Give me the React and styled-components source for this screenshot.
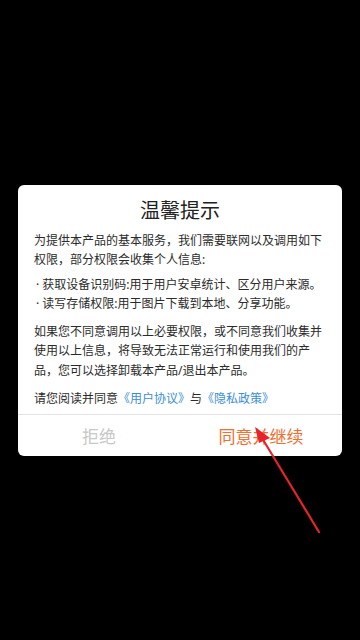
import React from "react";
import styled, { createGlobalStyle } from "styled-components";

const GlobalStyle = createGlobalStyle`
  html, body {
    margin: 0;
    padding: 0;
    background: #000;
    font-family: "Noto Sans", "Noto Sans CJK SC", sans-serif;
  }
`;

const App = () => {
  return (
    <Screen>
      <GlobalStyle />
      <Dialog>
        <Title>温馨提示</Title>
        <Body>
          <Para>
            为提供本产品的基本服务，我们需要联网以及调用如下权限，部分权限会收集个人信息:
          </Para>
          <List>
            <Item>· 获取设备识别码:用于用户安卓统计、区分用户来源。</Item>
            <Item>· 读写存储权限:用于图片下载到本地、分享功能。</Item>
          </List>
          <Para>
            如果您不同意调用以上必要权限，或不同意我们收集并使用以上信息，将导致无法正常运行和使用我们的产品，您可以选择卸载本产品/退出本产品。
          </Para>
          <Agree>
            请您阅读并同意<Link>《用户协议》</Link>与<Link>《隐私政策》</Link>
          </Agree>
        </Body>
        <Actions>
          <ActionButton>拒绝</ActionButton>
          <ActionButton primary>同意并继续</ActionButton>
        </Actions>
      </Dialog>
      {/* red annotation arrow */}
      <Arrow viewBox="0 0 360 640">
        <line x1="319" y1="532" x2="262" y2="438" stroke="#e8232b" strokeWidth="2.2" strokeLinecap="round" />
        <polygon points="255,427 270,438 259,443" fill="#e8232b" />
      </Arrow>
    </Screen>
  );
};

const Screen = styled.div`
  position: relative;
  width: 360px;
  height: 640px;
  background: #000;
  display: flex;
  align-items: center;
  justify-content: center;
  overflow: hidden;
`;

const Dialog = styled.div`
  width: 324px;
  height: 271px;
  background: #fff;
  border-radius: 6px;
  display: flex;
  flex-direction: column;
  box-sizing: border-box;
`;

const Title = styled.div`
  padding-top: 13px;
  text-align: center;
  font-size: 20px;
  line-height: 26px;
  color: #222;
`;

const Body = styled.div`
  padding: 7px 16px 0;
  font-size: 12px;
  line-height: 19.5px;
  color: #2b2b2b;
  display: flex;
  flex-direction: column;
  gap: 5px;
  flex: 1;
`;

const Para = styled.p`
  margin: 0;
`;

const List = styled.div`
  display: flex;
  flex-direction: column;
  margin-bottom: 3px;
`;

const Item = styled.div`
  padding-left: 2px;
  white-space: nowrap;
`;

const Agree = styled.div`
  margin-top: 4px;
`;

const Link = styled.span`
  color: #3a8ed6;
`;

const Actions = styled.div`
  display: flex;
  height: 41px;
  border-top: 1px solid #e3e3e3;
`;

const ActionButton = styled.div`
  flex: 1;
  display: flex;
  align-items: center;
  justify-content: center;
  font-size: 17px;
  color: ${(p) => (p.primary ? "#f07030" : "#c8c8c8")};
`;

const Arrow = styled.svg`
  position: absolute;
  left: 0;
  top: 0;
  width: 360px;
  height: 640px;
  pointer-events: none;
`;

export default App;
